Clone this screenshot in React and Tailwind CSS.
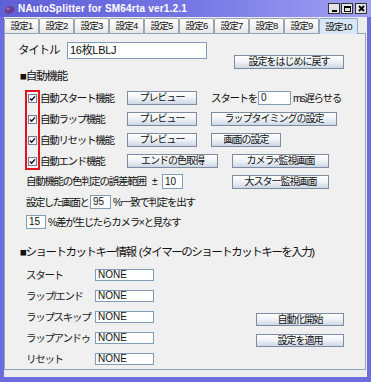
import React from 'react';

function Btn({ w, h = 'h-[14px]', children, className = '' }) {
  return (
    <div
      className={`${w} ${h} shrink-0 flex items-center justify-center whitespace-nowrap border border-[#7d8ca3] bg-linear-to-b from-white via-[#eef2f7] to-[#cdd7e4] text-[10px] tracking-[-1px] leading-none text-[#111] ${className}`}
    >
      {children}
    </div>
  );
}

function Field({ w, h = 'h-[14px]', value, className = '' }) {
  return (
    <div
      className={`${w} ${h} shrink-0 flex items-center whitespace-nowrap border border-[#7f9db9] bg-white pl-[2px] text-[10px] leading-none text-[#111] ${className}`}
    >
      {value}
    </div>
  );
}

function Check() {
  return (
    <svg width="9" height="9" viewBox="0 0 9 9" className="shrink-0">
      <rect x="0.5" y="0.5" width="8" height="8" fill="#f4f6fa" stroke="#6d7f9c" />
      <path d="M2 4.6 L3.6 6.3 L7 2.4" fill="none" stroke="#111" strokeWidth="1.4" />
    </svg>
  );
}

const tabs = ['設定1', '設定2', '設定3', '設定4', '設定5', '設定6', '設定7', '設定8', '設定9'];

export default function App() {
  return (
    <div className="w-[371px] h-[382px] flex flex-col bg-[#6c6cde] font-['Liberation_Sans','Noto_Sans_CJK_JP',sans-serif] text-[#111] overflow-hidden">
      {/* title bar */}
      <div className="h-[17px] shrink-0 flex items-center bg-linear-to-r from-[#5f5fd8] via-[#7474e4] to-[#a2a2f2] pl-[3px] pr-[4px]">
        <svg width="12" height="12" viewBox="0 0 12 12" className="shrink-0">
          <ellipse cx="6.5" cy="7" rx="5" ry="3.6" transform="rotate(-25 6.5 7)" fill="#6b3d8c" />
          <ellipse cx="5" cy="6" rx="2" ry="1" transform="rotate(-25 5 6)" fill="#9a6ec0" />
          <path d="M9 2.5 L11 1.5 L10.5 4 Z" fill="#4a9a3a" />
        </svg>
        <span className="ml-[3px] text-[10px] font-bold text-white leading-none tracking-[0.2px] whitespace-nowrap">NAutoSplitter for SM64rta ver1.2.1</span>
        <div className="ml-auto flex items-center gap-[1px]">
          <div className="w-[12px] h-[11px] bg-[#e4e4e4] border border-[#333] flex items-end justify-center pb-[1px]">
            <div className="w-[5px] h-[2px] bg-black" />
          </div>
          <div className="w-[12px] h-[11px] bg-[#e4e4e4] border border-[#333] flex items-center justify-center">
            <div className="w-[7px] h-[6px] border border-black border-t-2" />
          </div>
          <div className="ml-[1px] w-[12px] h-[11px] bg-[#e4e4e4] border border-[#333] flex items-center justify-center">
            <svg width="7" height="7" viewBox="0 0 7 7">
              <path d="M1 1 L6 6 M6 1 L1 6" stroke="#000" strokeWidth="1.8" />
            </svg>
          </div>
        </div>
      </div>

      {/* window body */}
      <div className="flex-1 mx-[4px] mb-[5px] bg-[#ececec] flex flex-col">
        {/* tabs */}
        <div className="h-[16px] shrink-0 flex items-end">
          {tabs.map((t) => (
            <div
              key={t}
              className="w-[35px] h-[15px] shrink-0 flex items-center justify-center border border-b-0 border-[#9aa4b0] rounded-t-[2px] bg-linear-to-b from-white to-[#e6e6e6] text-[9.5px] tracking-[-0.8px] leading-none whitespace-nowrap"
            >
              {t}
            </div>
          ))}
          <div className="w-[39px] h-[16px] shrink-0 relative top-[1px] z-10 flex items-center justify-center border border-b-0 border-[#8aa8cc] rounded-t-[2px] bg-[#d9e6f5] text-[9.5px] tracking-[-0.8px] leading-none whitespace-nowrap">
            設定10
          </div>
        </div>

        {/* panel */}
        <div className="relative w-[362px] h-[337px] border border-[#94a3b8] bg-[#f0f0f0] flex flex-col whitespace-nowrap">
          {/* title row */}
          <div className="mt-[8px] flex items-start">
            <span className="ml-[13px] w-[49px] h-[17px] flex items-center text-[11.5px] tracking-[-1.2px] leading-none">タイトル</span>
            <Field w="w-[140px]" h="h-[17px]" value="16枚LBLJ" className="text-[11px] tracking-[-0.3px]" />
            <Btn w="w-[110px]" h="h-[14px]" className="ml-[27px] mt-[13px]">設定をはじめに戻す</Btn>
          </div>

          <div className="mt-[1px] ml-[15px] h-[14px] flex items-center text-[11.5px] tracking-[-1.2px] leading-none">■自動機能</div>

          {/* auto rows */}
          <div className="mt-[7px] flex flex-col gap-[7px]">
            <div className="h-[14px] flex items-center">
              <div className="ml-[23px] w-[99px] flex items-center">
                <Check />
                <span className="ml-[3px] text-[10.5px] tracking-[-1.3px] leading-none">自動スタート機能</span>
              </div>
              <Btn w="w-[70px]">プレビュー</Btn>
              <span className="ml-[14px] w-[47px] text-[10.5px] tracking-[-1.3px] leading-none">スタートを</span>
              <Field w="w-[33px]" value="0" />
              <span className="ml-[2px] text-[10.5px] tracking-[-1.3px] leading-none">ms遅らせる</span>
            </div>
            <div className="h-[14px] flex items-center">
              <div className="ml-[23px] w-[99px] flex items-center">
                <Check />
                <span className="ml-[3px] text-[10.5px] tracking-[-1.3px] leading-none">自動ラップ機能</span>
              </div>
              <Btn w="w-[70px]">プレビュー</Btn>
              <Btn w="w-[126px]" className="ml-[14px]">ラップタイミングの設定</Btn>
            </div>
            <div className="h-[14px] flex items-center">
              <div className="ml-[23px] w-[99px] flex items-center">
                <Check />
                <span className="ml-[3px] text-[10.5px] tracking-[-1.3px] leading-none">自動リセット機能</span>
              </div>
              <Btn w="w-[70px]">プレビュー</Btn>
              <Btn w="w-[70px]" className="ml-[14px]">画面の設定</Btn>
            </div>
            <div className="h-[14px] flex items-center">
              <div className="ml-[23px] w-[99px] flex items-center">
                <Check />
                <span className="ml-[3px] text-[10.5px] tracking-[-1.3px] leading-none">自動エンド機能</span>
              </div>
              <Btn w="w-[91px]">エンドの色取得</Btn>
              <Btn w="w-[97px]" className="ml-[14px]">カメラ×監視画面</Btn>
            </div>
          </div>

          {/* tolerance rows */}
          <div className="mt-[6px] h-[15px] flex items-center">
            <span className="ml-[21px] w-[126px] text-[10.5px] tracking-[-1.3px] leading-none">自動機能の色判定の誤差範囲</span>
            <span className="w-[10px] text-[10px] leading-none">±</span>
            <Field w="w-[21px]" h="h-[15px]" value="10" />
            <Btn w="w-[97px]" className="ml-[49px]">大スター監視画面</Btn>
          </div>
          <div className="mt-[6px] h-[14px] flex items-center">
            <span className="ml-[21px] w-[64px] text-[10.5px] tracking-[-1.6px] leading-none">設定した画面と</span>
            <Field w="w-[21px]" value="95" />
            <span className="ml-[2px] text-[10.5px] tracking-[-1.3px] leading-none">%一致で判定を出す</span>
          </div>
          <div className="mt-[6px] h-[14px] flex items-center">
            <Field w="w-[20px]" value="15" className="ml-[21px]" />
            <span className="ml-[2px] text-[10.5px] tracking-[-1.3px] leading-none">%差が生じたらカメラ×と見なす</span>
          </div>

          <div className="mt-[17px] ml-[15px] h-[14px] flex items-center text-[11.5px] tracking-[-1.5px] leading-none">
            ■ショートカットキー情報&nbsp;&nbsp;(タイマーのショートカットキーを入力)
          </div>

          {/* shortcut keys */}
          <div className="flex items-start">
            <div className="ml-[21px] mt-[9px] flex flex-col gap-[9px]">
              {['スタート', 'ラップ/エンド', 'ラップスキップ', 'ラップアンドゥ', 'リセット'].map((k) => (
                <div key={k} className="h-[12px] flex items-center">
                  <span className="w-[69px] text-[10.5px] tracking-[-1.3px] leading-none text-[#222]">{k}</span>
                  <Field w="w-[59px]" h="h-[12px]" value="NONE" className="text-[9.5px]" />
                </div>
              ))}
            </div>
            <div className="ml-[102px] mt-[53px] flex flex-col gap-[8px]">
              <Btn w="w-[88px]" h="h-[13px]">自動化開始</Btn>
              <Btn w="w-[88px]" h="h-[13px]">設定を適用</Btn>
            </div>
          </div>

          {/* red annotation box */}
          <div className="absolute left-[20px] top-[56px] w-[15px] h-[80px] border-2 border-[#e0141e] pointer-events-none" />
        </div>
      </div>
    </div>
  );
}
